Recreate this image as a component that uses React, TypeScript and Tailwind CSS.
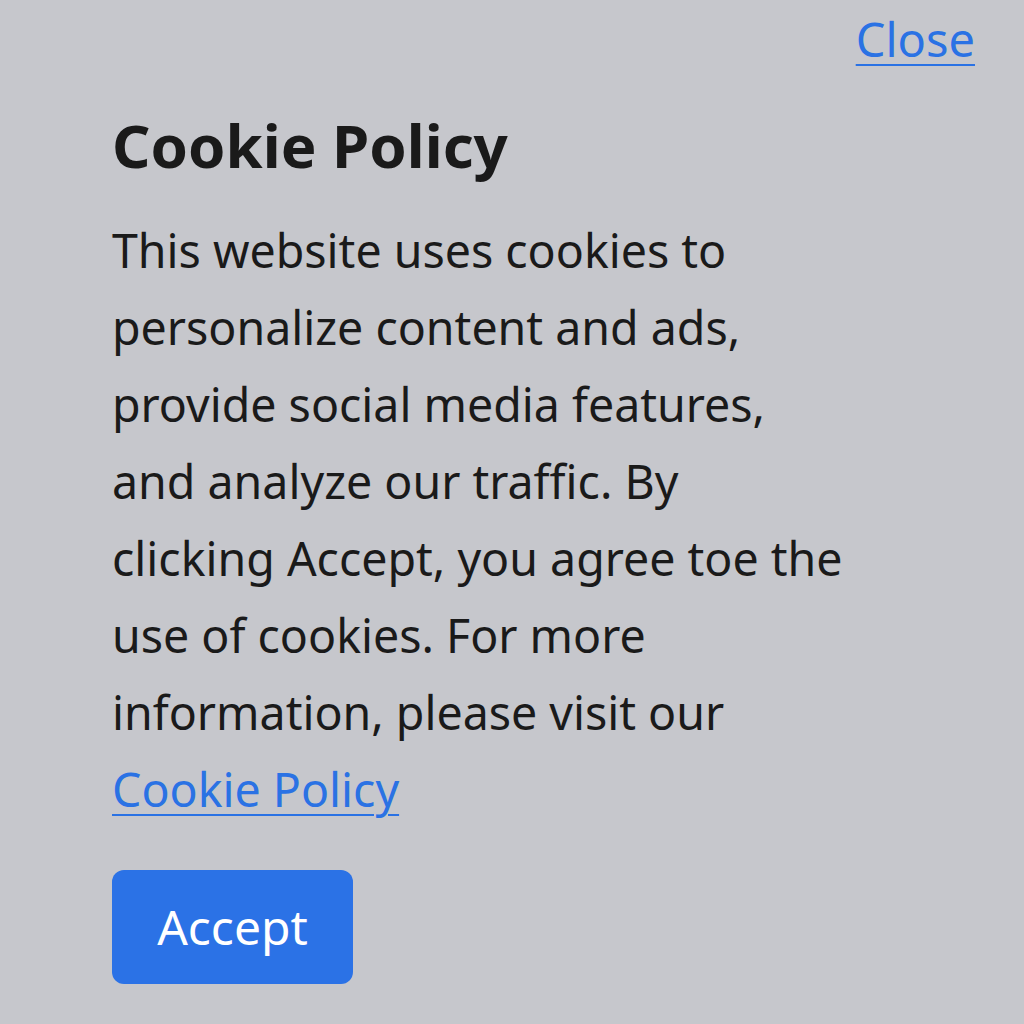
const lines = [
  "This website uses cookies to",
  "personalize content and ads,",
  "provide social media features,",
  "and analyze our traffic. By",
  "clicking Accept, you agree toe the",
  "use of cookies. For more",
  "information, please visit our",
];

export default function App() {
  return (
    <div
      className="flex h-[1024px] w-[1024px] flex-col bg-[#c6c7cc] text-[#1a1a1a]"
      style={{ fontFamily: '"Noto Sans", "Open Sans", sans-serif' }}
    >
      <div className="flex justify-end pr-[49px] pt-[7px]">
        <a href="#" className="text-[47px] leading-[64px] text-[#2a72e4] underline underline-offset-[7px] decoration-2">
          Close
        </a>
      </div>
      <div className="pl-[112px]">
        <h1 className="mt-[34px] text-[60px] font-bold leading-[80px]">Cookie Policy</h1>
        <p className="mt-[27px] text-[46.5px] leading-[77px]">
          {lines.map((line) => (
            <span key={line} className="block">
              {line}
            </span>
          ))}
          <a href="#" className="block text-[#2a72e4] underline underline-offset-[7px] decoration-2">
            Cookie Policy
          </a>
        </p>
        <button
          type="button"
          className="mt-[42px] flex h-[114px] w-[241px] items-center justify-center rounded-[12px] bg-[#2b72e6] text-[48px] text-white"
        >
          Accept
        </button>
      </div>
    </div>
  );
}
